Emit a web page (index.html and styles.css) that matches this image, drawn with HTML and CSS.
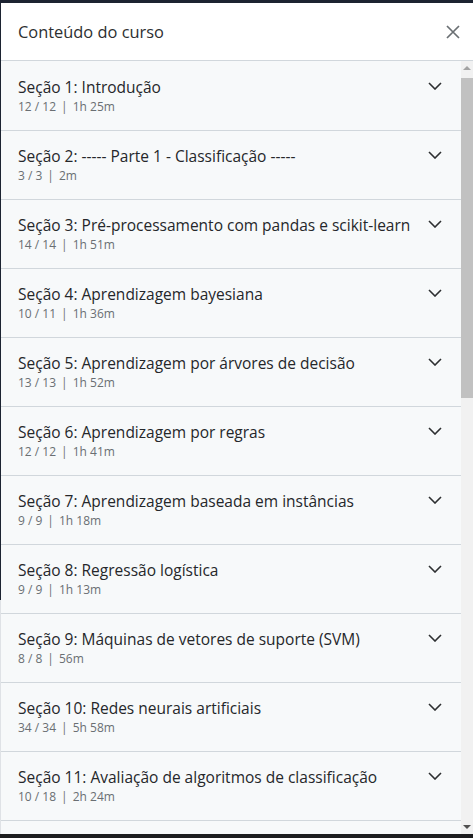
FILE: index.html
```html
<!DOCTYPE html>
<html lang="pt-BR">
<head>
<meta charset="utf-8">
<title>Conteúdo do curso</title>
<link rel="stylesheet" href="styles.css">
</head>
<body>
<div class="panel">
  <header class="panel-header">
    <h2 class="panel-title">Conteúdo do curso</h2>
    <button class="close" aria-label="Fechar">
      <svg width="14" height="14" viewBox="0 0 14 14"><path d="M1 1L13 13M13 1L1 13" stroke="#6a6f73" stroke-width="1.7" fill="none"/></svg>
    </button>
  </header>
  <div class="panel-body">
    <ul class="sections">
      <li class="section"><div class="info"><div class="title">Seção 1: Introdução</div><div class="meta">12 / 12<span class="sep">|</span>1h 25m</div></div><span class="chev"><svg width="14" height="8" viewBox="0 0 14 8"><path d="M1 1L7 7L13 1" stroke="#2d2f31" stroke-width="1.6" fill="none"/></svg></span></li>
      <li class="section"><div class="info"><div class="title">Seção 2: ----- Parte 1 - Classificação -----</div><div class="meta">3 / 3<span class="sep">|</span>2m</div></div><span class="chev"><svg width="14" height="8" viewBox="0 0 14 8"><path d="M1 1L7 7L13 1" stroke="#2d2f31" stroke-width="1.6" fill="none"/></svg></span></li>
      <li class="section"><div class="info"><div class="title">Seção 3: Pré-processamento com pandas e scikit-learn</div><div class="meta">14 / 14<span class="sep">|</span>1h 51m</div></div><span class="chev"><svg width="14" height="8" viewBox="0 0 14 8"><path d="M1 1L7 7L13 1" stroke="#2d2f31" stroke-width="1.6" fill="none"/></svg></span></li>
      <li class="section"><div class="info"><div class="title">Seção 4: Aprendizagem bayesiana</div><div class="meta">10 / 11<span class="sep">|</span>1h 36m</div></div><span class="chev"><svg width="14" height="8" viewBox="0 0 14 8"><path d="M1 1L7 7L13 1" stroke="#2d2f31" stroke-width="1.6" fill="none"/></svg></span></li>
      <li class="section"><div class="info"><div class="title">Seção 5: Aprendizagem por árvores de decisão</div><div class="meta">13 / 13<span class="sep">|</span>1h 52m</div></div><span class="chev"><svg width="14" height="8" viewBox="0 0 14 8"><path d="M1 1L7 7L13 1" stroke="#2d2f31" stroke-width="1.6" fill="none"/></svg></span></li>
      <li class="section"><div class="info"><div class="title">Seção 6: Aprendizagem por regras</div><div class="meta">12 / 12<span class="sep">|</span>1h 41m</div></div><span class="chev"><svg width="14" height="8" viewBox="0 0 14 8"><path d="M1 1L7 7L13 1" stroke="#2d2f31" stroke-width="1.6" fill="none"/></svg></span></li>
      <li class="section"><div class="info"><div class="title">Seção 7: Aprendizagem baseada em instâncias</div><div class="meta">9 / 9<span class="sep">|</span>1h 18m</div></div><span class="chev"><svg width="14" height="8" viewBox="0 0 14 8"><path d="M1 1L7 7L13 1" stroke="#2d2f31" stroke-width="1.6" fill="none"/></svg></span></li>
      <li class="section"><div class="info"><div class="title">Seção 8: Regressão logística</div><div class="meta">9 / 9<span class="sep">|</span>1h 13m</div></div><span class="chev"><svg width="14" height="8" viewBox="0 0 14 8"><path d="M1 1L7 7L13 1" stroke="#2d2f31" stroke-width="1.6" fill="none"/></svg></span></li>
      <li class="section"><div class="info"><div class="title">Seção 9: Máquinas de vetores de suporte (SVM)</div><div class="meta">8 / 8<span class="sep">|</span>56m</div></div><span class="chev"><svg width="14" height="8" viewBox="0 0 14 8"><path d="M1 1L7 7L13 1" stroke="#2d2f31" stroke-width="1.6" fill="none"/></svg></span></li>
      <li class="section"><div class="info"><div class="title">Seção 10: Redes neurais artificiais</div><div class="meta">34 / 34<span class="sep">|</span>5h 58m</div></div><span class="chev"><svg width="14" height="8" viewBox="0 0 14 8"><path d="M1 1L7 7L13 1" stroke="#2d2f31" stroke-width="1.6" fill="none"/></svg></span></li>
      <li class="section"><div class="info"><div class="title">Seção 11: Avaliação de algoritmos de classificação</div><div class="meta">10 / 18<span class="sep">|</span>2h 24m</div></div><span class="chev"><svg width="14" height="8" viewBox="0 0 14 8"><path d="M1 1L7 7L13 1" stroke="#2d2f31" stroke-width="1.6" fill="none"/></svg></span></li>
    </ul>
    <div class="scrollbar">
      <div class="sb-btn"><span class="tri-up"></span></div>
      <div class="sb-track"><div class="sb-thumb"></div></div>
      <div class="sb-btn"><span class="tri-down"></span></div>
    </div>
  </div>
</div>
</body>
</html>
```
FILE: styles.css
```css
html, body {
  margin: 0;
  padding: 0;
}
body {
  width: 473px;
  height: 838px;
  overflow: hidden;
  background: linear-gradient(to bottom, #1c2331 0, #1c2331 600px, #dfe2e6 600px, #dfe2e6 834px, #1c1d1f 834px);
  font-family: "Open Sans", "Noto Sans", sans-serif;
  color: #2d2f31;
}
.panel {
  margin: 3px 0 0 1px;
  width: 472px;
  height: 831px;
  display: flex;
  flex-direction: column;
  background: #f7f9fa;
  overflow: hidden;
}
.panel-header {
  flex: none;
  height: 57px;
  background: #fff;
  border-bottom: 1px solid #d1d7dc;
  display: flex;
  align-items: center;
  justify-content: space-between;
  padding: 0 13px 0 17px;
}
.panel-title {
  margin: 0;
  font-size: 16.4px;
  font-weight: 400;
  color: #2d2f31;
}
.close {
  border: 0;
  background: none;
  padding: 0;
  width: 14px;
  height: 14px;
  display: flex;
}
.panel-body {
  flex: 1;
  display: flex;
  min-height: 0;
}
.sections {
  list-style: none;
  margin: 0;
  padding: 1px 0 0;
  flex: 1;
  min-width: 0;
}
.section {
  height: 68px;
  border-bottom: 1px solid #d1d7dc;
  display: flex;
  justify-content: space-between;
  align-items: flex-start;
  padding: 0 18px 0 17px;
}
.info {
  padding-top: 15px;
}
.title {
  font-size: 15.5px;
  font-weight: 400;
  line-height: 21px;
  color: #25272a;
  white-space: nowrap;
}
.meta {
  font-size: 12px;
  line-height: 17px;
  color: #6a6f73;
  white-space: nowrap;
}
.sep {
  margin: 0 5px;
}
.chev {
  display: flex;
  margin-top: 20px;
  width: 16px;
  height: 8px;
  justify-content: center;
}
.scrollbar {
  flex: none;
  width: 12px;
  background: #f1f1f1;
  display: flex;
  flex-direction: column;
}
.sb-btn {
  height: 14px;
  display: flex;
  align-items: center;
  justify-content: center;
}
.sb-track {
  flex: 1;
}
.sb-thumb {
  margin-top: 3px;
  height: 320px;
  background: #c1c1c1;
}
.tri-up {
  width: 0;
  height: 0;
  border-left: 4px solid transparent;
  border-right: 4px solid transparent;
  border-bottom: 4px solid #a3a3a3;
}
.tri-down {
  width: 0;
  height: 0;
  border-left: 4px solid transparent;
  border-right: 4px solid transparent;
  border-top: 4px solid #505050;
}
```
